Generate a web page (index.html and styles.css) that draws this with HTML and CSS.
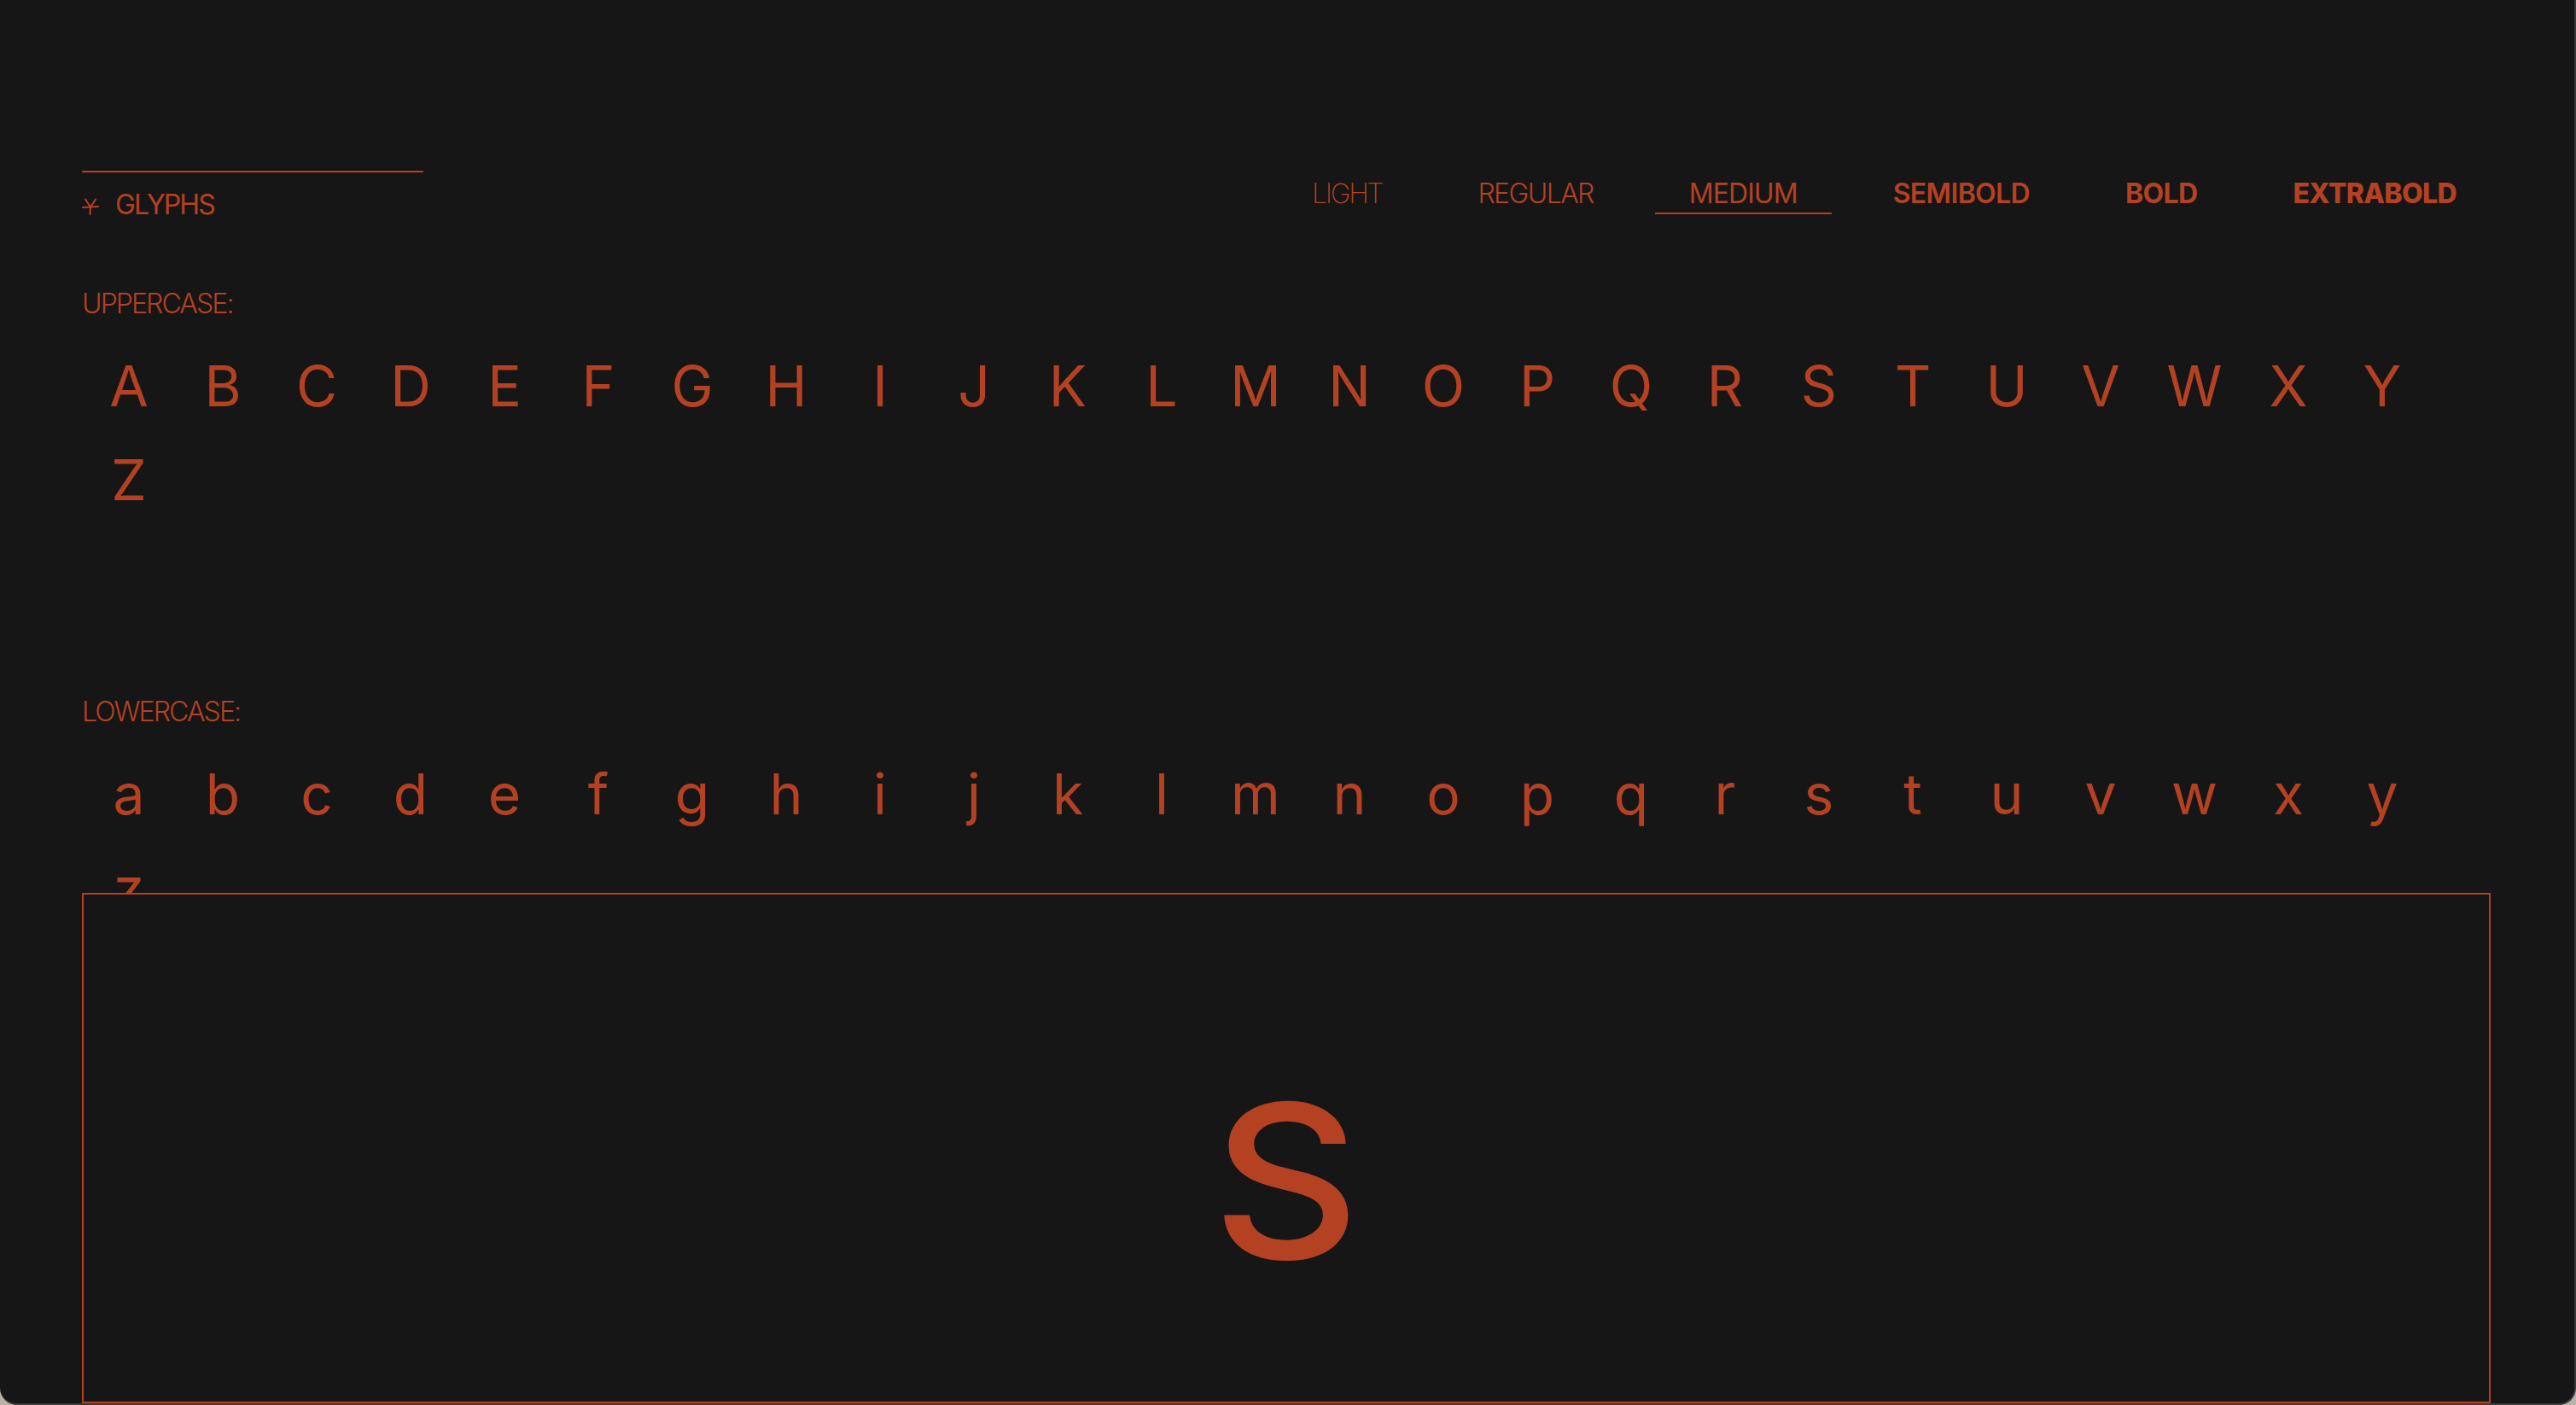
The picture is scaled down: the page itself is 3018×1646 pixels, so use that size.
FILE: index.html
```html
<!DOCTYPE html>
<html lang="en">
<head>
<meta charset="utf-8">
<title>Glyphs</title>
<link rel="stylesheet" href="styles.css">
</head>
<body>
<div class="frame">
  <header class="top">
    <div class="title-block">
      <div class="rule"></div>
      <div class="title">
        <svg class="star" width="20" height="20" viewBox="0 0 20 20" fill="none" stroke="currentColor" stroke-width="2" stroke-linecap="round">
          <path d="M10 10.5 L4 1.5"/>
          <path d="M10 10.5 L16 1.5"/>
          <path d="M1 11 L19 10"/>
          <path d="M10 10.5 L9.5 19"/>
        </svg>
        <span>GLYPHS</span>
      </div>
    </div>
    <nav class="weights">
      <span class="tab w-light">LIGHT</span>
      <span class="tab w-regular">REGULAR</span>
      <span class="tab w-medium active">MEDIUM</span>
      <span class="tab w-semibold">SEMIBOLD</span>
      <span class="tab w-bold">BOLD</span>
      <span class="tab w-extrabold">EXTRABOLD</span>
    </nav>
  </header>

  <section class="glyph-section upper">
    <div class="label">UPPERCASE:</div>
    <div class="grid">
      <span>A</span><span>B</span><span>C</span><span>D</span><span>E</span><span>F</span><span>G</span><span>H</span><span>I</span><span>J</span><span>K</span><span>L</span><span>M</span><span>N</span><span>O</span><span>P</span><span>Q</span><span>R</span><span>S</span><span>T</span><span>U</span><span>V</span><span>W</span><span>X</span><span>Y</span><span>Z</span>
    </div>
  </section>

  <section class="glyph-section lower">
    <div class="label">LOWERCASE:</div>
    <div class="grid">
      <span>a</span><span>b</span><span>c</span><span>d</span><span>e</span><span>f</span><span>g</span><span>h</span><span>i</span><span>j</span><span>k</span><span>l</span><span>m</span><span>n</span><span>o</span><span>p</span><span>q</span><span>r</span><span>s</span><span>t</span><span>u</span><span>v</span><span>w</span><span>x</span><span>y</span><span>z</span>
    </div>
  </section>

  <div class="preview">
    <span class="big">S</span>
  </div>
</div>
</body>
</html>
```

FILE: styles.css
```css
html {
  background: #b9b3a7;
}

body {
  margin: 0;
  font-family: Inter, "Liberation Sans", Arial, sans-serif;
  color: #b54123;
}

.frame {
  height: 1646px;
  box-sizing: border-box;
  background: #161616;
  border-right: 2px solid #3a3a3a;
  border-bottom: 2px solid #3a3a3a;
  border-radius: 0 0 20px 20px;
  overflow: hidden;
  padding: 200px 98px 0 96px;
}

.top {
  display: flex;
  justify-content: space-between;
  align-items: flex-start;
}

.rule {
  width: 400px;
  height: 2px;
  background: currentColor;
}

.title {
  display: flex;
  align-items: center;
  gap: 19px;
  margin-top: 18px;
  font-size: 32px;
  font-weight: 400;
  line-height: normal;
  letter-spacing: -0.06em;
}

.star {
  display: block;
  margin-top: 4px;
}

.weights {
  display: flex;
  gap: 32px;
  margin-top: 7px;
}

.tab {
  padding: 0 40px 3px;
  font-size: 32px;
  line-height: normal;
  letter-spacing: -0.02em;
  border-bottom: 2px solid transparent;
}

.tab.active {
  border-bottom-color: currentColor;
}

.w-light { font-weight: 200; letter-spacing: -0.07em; }
.w-regular { font-weight: 300; letter-spacing: -0.05em; }
.w-medium { font-weight: 400; letter-spacing: -0.03em; }
.w-semibold { font-weight: 600; }
.w-bold { font-weight: 700; }
.w-extrabold { font-weight: 800; }

.upper {
  margin-top: 77px;
}

.lower {
  margin-top: 197px;
}

.label {
  font-size: 32px;
  font-weight: 300;
  line-height: 40px;
  letter-spacing: -0.06em;
}

.grid {
  display: grid;
  grid-template-columns: repeat(auto-fill, 110px);
  margin-top: 21px;
}

.grid span {
  height: 110px;
  line-height: 110px;
  text-align: center;
  font-size: 66px;
  font-weight: 400;
}

.preview {
  position: relative;
  margin-top: -49px;
  height: 598px;
  box-sizing: border-box;
  border: 2px solid currentColor;
  background: #161616;
  padding-top: 76px;
  display: flex;
  align-items: center;
  justify-content: center;
}

.big {
  font-size: 250px;
  font-weight: 500;
  line-height: normal;
  display: inline-block;
  transform: scaleX(1.07);
}
```
